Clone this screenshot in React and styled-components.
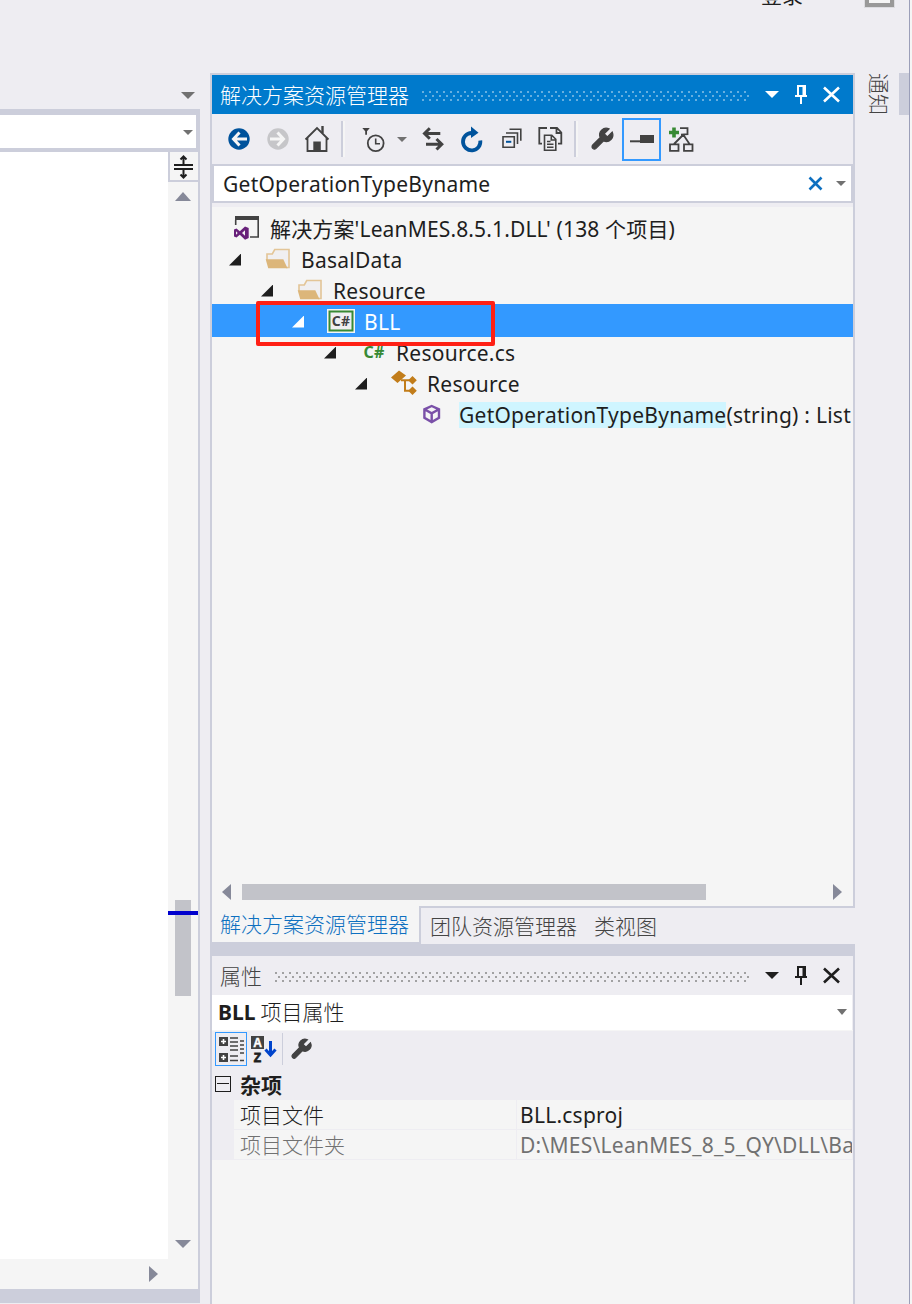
import React from 'react';
import styled, { createGlobalStyle } from 'styled-components';

const GlobalStyle = createGlobalStyle`
    * {
        box-sizing: border-box;
    }

    body {
        margin: 0;
        background: #eeedf2;
        color: #1e1e1e;
        font-family: "Noto Sans", "Noto Sans CJK SC", sans-serif;
        font-size: 21px;
        line-height: 30px;
        white-space: nowrap;
    }

    svg {
        display: block;
        flex: none;
        overflow: visible;
    }
`;

const Shell = styled.div`
    display: flex;
    width: 912px;
    height: 1304px;
    overflow: hidden;
    background: #f5f5f5;
`;

const Frame = styled.div`
    display: flex;
    flex-direction: column;
    width: 910px;
    border-right: 1px solid #9b9fb9;
    background: #eeedf2;
`;

const AccountBar = styled.div`
    display: flex;
    justify-content: flex-end;
    align-items: flex-end;
    height: 8px;
    padding-right: 14px;
    overflow: hidden;
`;

const SignIn = styled.span`
    height: 30px;
    margin: 0 61px -2px 0;
`;

const Avatar = styled.div`
    width: 31px;
    height: 30px;
    border: 1px solid #dcdce0;
    background: #f5f5f5;
    box-shadow: inset 0 0 0 4px #999;
`;

const Workspace = styled.div`
    display: flex;
    flex: 1;
    min-height: 0;
`;

/* ---- editor ---- */

const Editor = styled.div`
    display: flex;
    flex-direction: column;
    width: 200px;
    height: 1295px;
    margin-right: 10px;
`;

const EditorTabs = styled.div`
    display: flex;
    justify-content: flex-end;
    align-items: flex-end;
    height: 101px;
    padding: 0 5px 10px 0;
`;

const EditorBody = styled.div`
    display: flex;
    flex-direction: column;
    flex: 1;
    min-height: 0;
    padding: 6px 2px 14px 0;
    background: #cccedb;
`;

const MemberSelect = styled.div`
    display: flex;
    justify-content: flex-end;
    align-items: center;
    height: 33px;
    margin: 0 2px 4px 0;
    padding: 2px 3px 0 0;
    background: #fff;
`;

const CodeArea = styled.div`
    display: flex;
    flex: 1;
    min-height: 0;
`;

const CodeColumn = styled.div`
    display: flex;
    flex-direction: column;
    width: 168px;
`;

const CodePage = styled.div`
    flex: 1;
    background: #fff;
`;

const CodeScrollX = styled.div`
    display: flex;
    justify-content: flex-end;
    align-items: center;
    height: 30px;
    padding-right: 10px;
    background: #f5f5f5;
`;

const CodeScrollY = styled.div`
    display: flex;
    flex-direction: column;
    align-items: center;
    width: 30px;
    padding-bottom: 41px;
    background: #f5f5f5;
`;

const SplitHandle = styled.div`
    display: flex;
    justify-content: center;
    align-items: center;
    width: 30px;
    height: 30px;
    margin-bottom: 10px;
    padding: 2px 2px 0 0;
    border: solid #cccedb;
    border-width: 0 0 2px 2px;
`;

const TrackY = styled.div`
    flex: 1;
    width: 30px;
    padding: 699px 7px 0;
`;

const ThumbY = styled.div`
    position: relative;
    height: 96px;
    background: #c2c3c9;
`;

const CaretMark = styled.div`
    position: absolute;
    top: 11px;
    left: -7px;
    width: 30px;
    height: 4px;
    background: #0000cd;
`;

/* ---- tool windows ---- */

const Dock = styled.div`
    display: flex;
    flex-direction: column;
    width: 645px;
    padding-top: 65px;
`;

const Pane = styled.section`
    display: flex;
    flex-direction: column;
    height: ${({ $height }) => $height};
    flex: ${({ $height }) => ($height ? 'none' : 1)};
    border: solid #cccedb;
    border-width: ${({ $height }) => ($height ? '2px 2px 0' : '0 2px')};
    min-height: 0;
`;

const PaneHeader = styled.header`
    display: flex;
    align-items: center;
    flex: none;
    height: 39px;
    padding: 0 13px 0 8px;
    color: ${({ $active }) => ($active ? '#fff' : '#444')};
    background: ${({ $active }) => ($active ? '#007acc' : '#eeedf2')};
    font-weight: 300;

    svg {
        color: ${({ $active }) => ($active ? '#fff' : '#1e1e1e')};
    }
`;

const Grip = styled.div`
    flex: 1;
    height: 10px;
    margin: 2px 15px 0 13px;
    opacity: ${({ $active }) => ($active ? 0.4 : 0.75)};
    --dot: ${({ $active }) => ($active ? '#fff' : '#888')};
    background:
        radial-gradient(circle at 1px 1px, var(--dot) 1px, transparent 1.3px) 0 0 / 7px 8px,
        radial-gradient(circle at 1px 1px, var(--dot) 1px, transparent 1.3px) 3px 4px / 7px 8px;
`;

const HeaderButtons = styled.div`
    display: flex;
    align-items: center;
    gap: 16px;
`;

const Toolbar = styled.div`
    display: flex;
    align-items: center;
    flex: none;
    height: 50px;
    padding-left: 8px;
`;

const ToolButton = styled.div`
    display: flex;
    justify-content: center;
    align-items: center;
    width: ${({ $narrow }) => ($narrow ? '20px' : '39px')};
    height: 43px;
    padding-right: ${({ $narrow }) => ($narrow ? '4px' : '0')};
    border: ${({ $checked }) => ($checked ? '2px solid #3399ff' : '0')};
`;

const ToolSeparator = styled.div`
    width: 4px;
    height: 36px;
    margin: 0 ${({ $after }) => $after} 0 4px;
    border-left: 2px solid #cccedb;
    background: #f5f5f5;
`;

const SearchBox = styled.div`
    display: flex;
    align-items: center;
    flex: none;
    height: 39px;
    padding: 0 4px 0 9px;
    border: 2px solid #cccedb;
    background: #fff;
    letter-spacing: 0.25px;

    span {
        flex: 1;
    }
`;

const Tree = styled.div`
    flex: 1;
    min-height: 0;
    margin-top: 4px;
    padding-top: 6px;
    overflow: hidden;
    background: #f5f5f5;
`;

const TreeRow = styled.div`
    position: relative;
    display: flex;
    align-items: center;
    height: ${({ $selected }) => ($selected ? '33px' : '31px')};
    margin-top: ${({ $selected }) => ($selected ? '-2px' : '0')};
    padding-top: ${({ $selected }) => ($selected ? '2px' : '0')};
    padding-left: ${({ $level }) => 21 + Math.floor(31.5 * $level)}px;
    color: ${({ $selected }) => ($selected ? '#fff' : '#1e1e1e')};
    background: ${({ $selected }) => ($selected ? '#3399ff' : 'transparent')};
    letter-spacing: ${({ $level }) => ($level ? '0.25px' : '0.15px')};
`;

const Expander = styled.i`
    width: 12px;
    height: 12px;
    margin: 0 23px 0 -35px;
    background: currentColor;
    clip-path: polygon(100% 0, 100% 100%, 0 100%);
`;

const TreeLabel = styled.span`
    margin-left: 9px;
`;

const Match = styled.mark`
    display: inline-block;
    height: 26px;
    line-height: 26px;
    color: inherit;
    background: #cff5ff;
`;

const Callout = styled.div`
    position: absolute;
    z-index: 1;
    top: -3px;
    left: 44px;
    width: 239px;
    height: 45px;
    border: 4px solid #ff2015;
    border-radius: 2px;
`;

const TreeScroll = styled.div`
    display: flex;
    align-items: center;
    flex: none;
    height: 31px;
    padding: 0 11px 1px 10px;
    background: #f5f5f5;
`;

const ThumbX = styled.div`
    width: 464px;
    height: 16px;
    margin: 0 auto 0 11px;
    background: #c2c3c9;
`;

const PaneTabs = styled.div`
    display: flex;
    flex: none;
    height: 48px;
    border-bottom: 12px solid #cccedb;
    border-left: 2px solid #cccedb;
    font-weight: 300;
`;

const ActiveTab = styled.div`
    width: 207px;
    height: 34px;
    padding: 1px 0 0 8px;
    color: #0e70c0;
    background: #f5f5f5;
    box-shadow: 0 2px 0 #cccedb;
`;

const OtherTabs = styled.div`
    display: flex;
    flex: 1;
    gap: 17px;
    margin-top: -2px;
    padding: 3px 0 0 9px;
    border: solid #cccedb;
    border-width: 2px 0 0 2px;
    color: #444;
`;

const ObjectSelect = styled.div`
    display: flex;
    align-items: center;
    flex: none;
    height: 35px;
    margin-right: 1px;
    padding: 0 5px 1px 6px;
    background: #fff;

    b {
        margin-right: 5px;
    }

    span {
        flex: 1;
        font-weight: 300;
    }
`;

const PropToolbar = styled.div`
    display: flex;
    align-items: center;
    flex: none;
    height: 40px;
    padding: 0 0 3px 3px;
    border-top: 1px solid #f5f5f5;
`;

const ViewToggle = styled.div`
    display: flex;
    justify-content: center;
    align-items: center;
    width: 32px;
    height: 34px;
    margin-right: 4px;
    border: 1px solid #3399ff;
`;

const PropSeparator = styled.div`
    width: 1px;
    height: 32px;
    margin: 0 8px 0 4px;
    background: #cccedb;
`;

const Category = styled.div`
    display: flex;
    align-items: center;
    flex: none;
    height: 30px;
    padding-left: 3px;
    font-weight: 700;
`;

const Collapse = styled.i`
    width: 16px;
    height: 16px;
    margin: -3px 9px 0 0;
    border: 1px solid #1e1e1e;
    background: linear-gradient(#1e1e1e, #1e1e1e) center / 12px 1px no-repeat;
`;

const PropRow = styled.div`
    display: grid;
    grid-template-columns: 282px 1fr;
    flex: none;
    height: 30px;
    margin-right: 1px;
    border-left: 22px solid #eeedf2;
    background: #f5f5f5;
    color: ${({ $readOnly }) => ($readOnly ? '#717171' : '#1e1e1e')};
`;

const PropCell = styled.div`
    padding-left: ${({ $value }) => ($value ? '3px' : '6px')};
    border-bottom: 1px solid #eeedf2;
    border-left: ${({ $value }) => ($value ? '1px solid #eeedf2' : '0')};
    letter-spacing: ${({ $value }) => ($value ? '0.25px' : '0')};
    font-weight: ${({ $value }) => ($value ? 400 : 300)};
    overflow: hidden;
`;

const PropFill = styled.div`
    flex: 1;
    background: #f5f5f5;
`;

const SideRail = styled.aside`
    display: flex;
    justify-content: space-between;
    flex: 1;
    height: 42px;
    margin-top: 65px;
    padding-left: 9px;
    color: #444;

    span {
        writing-mode: vertical-rl;
        text-orientation: sideways;
        font-weight: 300;
    }
`;

const RailMark = styled.div`
    width: 10px;
    background: #cccedb;
`;

/* ---- icons ---- */

const Triangle = ({ w, h, dir = 'down', color = 'currentColor' }) => {
    const points = {
        down: `0,0 ${w},0 ${w / 2},${h}`,
        up: `0,${h} ${w},${h} ${w / 2},0`,
        left: `${w},0 ${w},${h} 0,${h / 2}`,
        right: `0,0 ${w},${h / 2} 0,${h}`,
    };
    return (
        <svg width={w} height={h}>
            <polygon points={points[dir]} fill={color} />
        </svg>
    );
};

const Icon = ({ children }) => (
    <svg width="27" height="27" viewBox="0 0 27 27" fill="none" stroke="#424242" strokeWidth="1.8">
        {children}
    </svg>
);

const NodeIcon = ({ children }) => (
    <svg width="28" height="31" viewBox="0 0 28 31" fill="none">
        {children}
    </svg>
);

const PinIcon = () => (
    <svg width="12" height="20" viewBox="0 0 12 20" fill="currentColor">
        <path d="M2 0h9v10h1v2H7v7H5v-7H0v-2h2zM4 2v8h3.500V2z" fillRule="evenodd" />
    </svg>
);

const CloseIcon = () => (
    <svg width="17" height="15" viewBox="0 0 17 15" fill="none" stroke="currentColor" strokeWidth="2.6">
        <path d="M1 .5l15 14M16 .5l-15 14" />
    </svg>
);

const WrenchIcon = ({ size }) => (
    <svg width={size} height={size} viewBox="2 1 22 22" fill="#424242" stroke="#424242" strokeWidth="1.2">
        <path d="M14.7 6.3a1 1 0 0 0 0 1.6l1.6 1.6a1 1 0 0 0 1.4 0l3.77-3.77a6 6 0 0 1-7.94 7.94l-6.91 6.91a2.12 2.12 0 0 1-3-3l6.91-6.91a6 6 0 0 1 7.94-7.94l-3.76 3.76z" />
    </svg>
);

const SplitIcon = () => (
    <svg width="19" height="24" viewBox="0 0 19 24" fill="none" stroke="#1e1e1e" strokeWidth="2">
        <path d="M0 10h19M0 14h19M9.5 2v8M9.5 14v8M6.5 4.5l3-3 3 3M6.5 19.5l3 3 3-3" />
    </svg>
);

const FolderIcon = () => (
    <NodeIcon>
        <path d="M3 16v-6h5.3l2.4-4.5H25v18h-3" fill="#f0eff1" stroke="#e3c597" strokeWidth="1.6" />
        <path d="M1.7 15.3h17.6l4.2 8.9H4.2z" fill="#dcb67a" />
    </NodeIcon>
);

const SolutionIcon = () => (
    <NodeIcon>
        <path d="M2 3h24v4H2z" fill="#424242" />
        <path d="M2.7 7v5M25.2 7v17H17" stroke="#424242" strokeWidth="1.6" />
        <path
            d="M12 13.5l3.7 1.5v10L12 26.7l-5.2-5-3.3 2.8L1 23.400v-7l2.500-1 3.300 2.800zM12 17.300l-3 2.700 3 2.800zM3 18.300v3.400l1.700-1.700z"
            fill="#68217a"
            fillRule="evenodd"
        />
    </NodeIcon>
);

const CsProjectIcon = () => (
    <NodeIcon>
        <path d="M0 3h28v24H0z" fill="#f5f5f5" />
        <path d="M2.500 5.500h23v19h-23z" fill="#f0eff1" stroke="#388a34" strokeWidth="2" />
        <text x="14" y="20" textAnchor="middle" fontSize="14" fontWeight="700" fill="#424242">C#</text>
    </NodeIcon>
);

const CsFileIcon = () => (
    <NodeIcon>
        <text x="15" y="20.500" textAnchor="middle" fontSize="16" fontWeight="700" fill="#388a34">C#</text>
    </NodeIcon>
);

const ClassIcon = () => (
    <NodeIcon>
        <path d="M1 9.500L9 2.500l7 5-8.500 7.500zM22.500 8l4.300 4.300-4.300 4.300-4.300-4.300zM22.500 18.500l4.300 4.300-4.300 4.300-4.300-4.300z" fill="#c27d1a" />
        <path d="M11 12.200h10M15 12v10.800h5" stroke="#c27d1a" strokeWidth="2" />
    </NodeIcon>
);

const MethodIcon = () => (
    <NodeIcon>
        <path
            d="M9.700 7l7.300 3.300v8.500l-7.300 4.200-7.300-4.200v-8.500zM2.400 10.300l7.300 4 7.300-4M9.700 14.300v8.500"
            stroke="#7a50a8"
            strokeWidth="2.400"
        />
    </NodeIcon>
);

const CategorizedIcon = () => (
    <svg width="26" height="27" viewBox="0 0 26 27" fill="none">
        <path d="M1 1h9v9H1zM1 17h9v9H1z" fill="#424242" />
        <path d="M5.500 3v5M3 5.500h5M5.500 19v5M3 21.500h5" stroke="#fff" strokeWidth="1.600" />
        <path
            d="M12 2h8M12 6h8M12 10h8M12 14h8M12 20h8M12 24.500h8M22 5h4M22 9h4M22 13h4M22 17h4M22 24.500h4"
            stroke="#424242"
            strokeWidth="1.500"
        />
    </svg>
);

const SortIcon = () => (
    <svg width="27" height="28" viewBox="0 0 27 28" fill="none" fontFamily="Liberation Sans, sans-serif" fontWeight="700">
        <path d="M0 1h13v13H0z" fill="#424242" />
        <text x="6.500" y="12" textAnchor="middle" fontSize="12" fill="#fff" stroke="#fff" strokeWidth=".4">A</text>
        <text x="6.500" y="26.500" textAnchor="middle" fontSize="12" fill="#1e1e1e" stroke="#1e1e1e" strokeWidth=".8">Z</text>
        <path d="M19.500 6v14M14.500 14.500l5 5.500 5-5.500" stroke="#0044cc" strokeWidth="3" />
    </svg>
);

const tree = [
    { level: 0, icon: <SolutionIcon />, label: "解决方案'LeanMES.8.5.1.DLL' (138 个项目)" },
    { level: 1, icon: <FolderIcon />, label: 'BasalData', open: true },
    { level: 2, icon: <FolderIcon />, label: 'Resource', open: true },
    { level: 3, icon: <CsProjectIcon />, label: 'BLL', open: true, selected: true },
    { level: 4, icon: <CsFileIcon />, label: 'Resource.cs', open: true },
    { level: 5, icon: <ClassIcon />, label: 'Resource', open: true },
    { level: 6, icon: <MethodIcon />, match: 'GetOperationTypeByname', label: '(string) : List' },
];

const properties = [
    { name: '项目文件', value: 'BLL.csproj' },
    { name: '项目文件夹', value: 'D:\\MES\\LeanMES_8_5_QY\\DLL\\Ba', readOnly: true },
];

const WindowHeader = ({ title, active }) => (
    <PaneHeader $active={active}>
        {title}
        <Grip $active={active} />
        <HeaderButtons>
            <Triangle w={14} h={7} />
            <PinIcon />
            <CloseIcon />
        </HeaderButtons>
    </PaneHeader>
);

const CodeEditor = () => (
    <Editor>
        <EditorTabs>
            <Triangle w={14} h={7} color="#717171" />
        </EditorTabs>
        <EditorBody>
            <MemberSelect>
                <Triangle w={10} h={5} color="#717171" />
            </MemberSelect>
            <CodeArea>
                <CodeColumn>
                    <CodePage />
                    <CodeScrollX>
                        <Triangle w={9} h={16} dir="right" color="#868999" />
                    </CodeScrollX>
                </CodeColumn>
                <CodeScrollY>
                    <SplitHandle>
                        <SplitIcon />
                    </SplitHandle>
                    <Triangle w={16} h={9} dir="up" color="#868999" />
                    <TrackY>
                        <ThumbY>
                            <CaretMark />
                        </ThumbY>
                    </TrackY>
                    <Triangle w={16} h={8} color="#868999" />
                </CodeScrollY>
            </CodeArea>
        </EditorBody>
    </Editor>
);

const ExplorerToolbar = () => (
    <Toolbar>
        <ToolButton>
            <Icon>
                <circle cx="13" cy="13" r="10.700" fill="#00539c" stroke="none" />
                <path d="M13.500 6.500L7.500 13l6 6.500M7.500 13H21" stroke="#f5f5f5" strokeWidth="3" />
            </Icon>
        </ToolButton>
        <ToolButton>
            <Icon>
                <circle cx="13" cy="13" r="10.700" fill="#c6c6c9" stroke="none" />
                <path d="M12.500 6.500l6 6.500-6 6.500M18.500 13H5" stroke="#f5f5f5" strokeWidth="3" />
            </Icon>
        </ToolButton>
        <ToolButton>
            <Icon>
                <path d="M1.500 13.500L13 2l11.500 11.500M3.500 12v13h19V12" />
                <path d="M18.500 0v7" strokeWidth="2.400" />
                <path d="M9.300 15.500h7.500V25H9.300z" fill="#424242" stroke="none" />
            </Icon>
        </ToolButton>
        <ToolSeparator $after="10px" />
        <ToolButton>
            <Icon>
                <circle cx="14.700" cy="17.300" r="7.900" />
                <path d="M14.700 12.500v5.300h4.300" strokeWidth="1.600" />
                <path d="M1.300 2h7.500L6 5.300v3.500H4.200V5.300z" fill="#424242" stroke="none" />
            </Icon>
        </ToolButton>
        <ToolButton $narrow>
            <Triangle w={10} h={5} color="#717171" />
        </ToolButton>
        <ToolButton>
            <Icon>
                <path d="M20.300 7.500H5M9.800 2.200L4.500 7.500l5.300 5.200M6 18.200h15.500M16.500 13l5.300 5.200-5.300 5.300" strokeWidth="3" />
            </Icon>
        </ToolButton>
        <ToolButton>
            <Icon>
                <path d="M21.300 14.500A8.700 8.700 0 1 1 12.500 7" stroke="#00539c" strokeWidth="3.800" />
                <path d="M12 .500l7.500 6.200L12 12z" fill="#00539c" stroke="none" />
            </Icon>
        </ToolButton>
        <ToolButton>
            <Icon>
                <path d="M5 10.700h11.300v10.500H5zM8 7h11.500v11M11.500 3.300h11.300v11.500" strokeWidth="1.600" />
                <path d="M8 15.800h5.300" stroke="#00539c" strokeWidth="2" />
            </Icon>
        </ToolButton>
        <ToolButton>
            <Icon>
                <path d="M5 17.700H2.300V2H10M13 2h7l4.300 4.500v11.200H21M19.500 2v5H24" />
                <path d="M7.500 9.300h7.300l4 4v11H7.500zM14.300 9.500v4.500h4.500M10 15.500h3.500M10 18.300h6.500M10 21.300h6.500" strokeWidth="1.600" />
            </Icon>
        </ToolButton>
        <ToolSeparator $after="5px" />
        <ToolButton>
            <WrenchIcon size={24} />
        </ToolButton>
        <ToolButton $checked>
            <Icon>
                <path d="M2 15.300h11" strokeWidth="2" />
                <path d="M12 9h14v8H12z" fill="#424242" stroke="none" />
            </Icon>
        </ToolButton>
        <ToolButton>
            <Icon>
                <path d="M13 2.200h7.500v6l-6.500.500M16 9L7 18M16.500 9l6 9M3 18.300h8.500v6.500H3zM17 18.300h8.500v6.500H17z" />
                <path d="M7 1.500v10M2 6.500h10" stroke="#388a34" strokeWidth="3.600" />
            </Icon>
        </ToolButton>
    </Toolbar>
);

const SolutionExplorer = () => (
    <>
        <Pane $height="835px">
            <WindowHeader title="解决方案资源管理器" active />
            <ExplorerToolbar />
            <SearchBox>
                <span>GetOperationTypeByname</span>
                <svg width="14" height="14" stroke="#0e70c0" strokeWidth="2.600">
                    <path d="M.500 .500l12 12M12.500 .500L.500 12.500" />
                </svg>
                <svg width="24" height="5">
                    <path d="M13 0h10l-5 5z" fill="#717171" />
                </svg>
            </SearchBox>
            <Tree>
                {tree.map(({ level, icon, label, match, open, selected }) => (
                    <TreeRow key={level} $level={level} $selected={selected}>
                        {open && <Expander />}
                        {icon}
                        <TreeLabel>
                            {match && <Match>{match}</Match>}
                            {label}
                        </TreeLabel>
                        {selected && <Callout />}
                    </TreeRow>
                ))}
            </Tree>
            <TreeScroll>
                <Triangle w={9} h={16} dir="left" color="#868999" />
                <ThumbX />
                <Triangle w={9} h={16} dir="right" color="#868999" />
            </TreeScroll>
        </Pane>
        <PaneTabs>
            <ActiveTab>解决方案资源管理器</ActiveTab>
            <OtherTabs>
                <span>团队资源管理器</span>
                <span>类视图</span>
            </OtherTabs>
        </PaneTabs>
    </>
);

const Properties = () => (
    <Pane>
        <WindowHeader title="属性" />
        <ObjectSelect>
            <b>BLL</b>
            <span>项目属性</span>
            <Triangle w={10} h={6} color="#717171" />
        </ObjectSelect>
        <PropToolbar>
            <ViewToggle>
                <CategorizedIcon />
            </ViewToggle>
            <SortIcon />
            <PropSeparator />
            <WrenchIcon size={22} />
        </PropToolbar>
        <Category>
            <Collapse />
            杂项
        </Category>
        {properties.map(({ name, value, readOnly }) => (
            <PropRow key={name} $readOnly={readOnly}>
                <PropCell>{name}</PropCell>
                <PropCell $value>{value}</PropCell>
            </PropRow>
        ))}
        <PropFill />
    </Pane>
);

const App = () => {
    return (
        <Shell>
            <GlobalStyle />
            <Frame>
                <AccountBar>
                    <SignIn>登录</SignIn>
                    <Avatar />
                </AccountBar>
                <Workspace>
                    <CodeEditor />
                    <Dock>
                        <SolutionExplorer />
                        <Properties />
                    </Dock>
                    <SideRail>
                        <span>通知</span>
                        <RailMark />
                    </SideRail>
                </Workspace>
            </Frame>
        </Shell>
    );
};

export default App;
